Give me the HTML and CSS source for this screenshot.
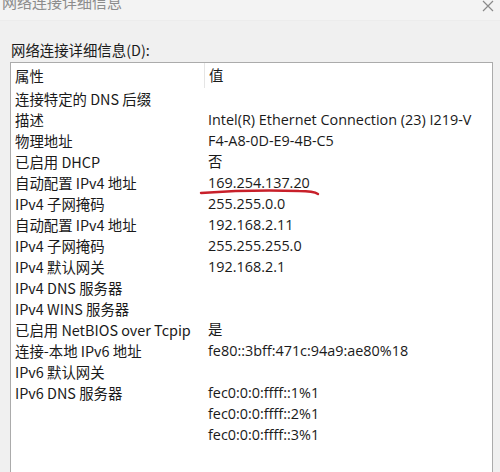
FILE: index.html
```
<!DOCTYPE html>
<html lang="zh">
<head>
<meta charset="utf-8">
<link rel="stylesheet" href="styles.css">
</head>
<body>
<div class="titlebar">
  <span class="title">网络连接详细信息</span>
  <svg class="close" width="12" height="12" viewBox="0 0 12 12"><path d="M1 1L11 11M11 1L1 11" stroke="#8a8a8a" stroke-width="1.2" fill="none"/></svg>
</div>
<div class="body">
  <div class="label">网络连接详细信息(D):</div>
  <div class="listbox">
    <div class="row head"><div class="c1">属性</div><div class="c2">值</div></div>
    <div class="row"><div class="c1">连接特定的 DNS 后缀</div><div class="c2"></div></div>
    <div class="row"><div class="c1">描述</div><div class="c2">Intel(R) Ethernet Connection (23) I219-V</div></div>
    <div class="row"><div class="c1">物理地址</div><div class="c2">F4-A8-0D-E9-4B-C5</div></div>
    <div class="row"><div class="c1">已启用 DHCP</div><div class="c2">否</div></div>
    <div class="row"><div class="c1">自动配置 IPv4 地址</div><div class="c2 mark">169.254.137.20<svg class="scribble" width="122" height="10" viewBox="0 0 122 10"><path d="M2 6 C30 4 70 3 100 4 C110 4 116 5 119 7" stroke="#c8202a" stroke-width="2.4" fill="none" stroke-linecap="round"/></svg></div></div>
    <div class="row"><div class="c1">IPv4 子网掩码</div><div class="c2">255.255.0.0</div></div>
    <div class="row"><div class="c1">自动配置 IPv4 地址</div><div class="c2">192.168.2.11</div></div>
    <div class="row"><div class="c1">IPv4 子网掩码</div><div class="c2">255.255.255.0</div></div>
    <div class="row"><div class="c1">IPv4 默认网关</div><div class="c2">192.168.2.1</div></div>
    <div class="row"><div class="c1">IPv4 DNS 服务器</div><div class="c2"></div></div>
    <div class="row"><div class="c1">IPv4 WINS 服务器</div><div class="c2"></div></div>
    <div class="row"><div class="c1">已启用 NetBIOS over Tcpip</div><div class="c2">是</div></div>
    <div class="row"><div class="c1">连接-本地 IPv6 地址</div><div class="c2">fe80::3bff:471c:94a9:ae80%18</div></div>
    <div class="row"><div class="c1">IPv6 默认网关</div><div class="c2"></div></div>
    <div class="row"><div class="c1">IPv6 DNS 服务器</div><div class="c2">fec0:0:0:ffff::1%1</div></div>
    <div class="row"><div class="c1"></div><div class="c2">fec0:0:0:ffff::2%1</div></div>
    <div class="row"><div class="c1"></div><div class="c2">fec0:0:0:ffff::3%1</div></div>
  </div>
</div>
</body>
</html>
```
FILE: styles.css
```
html, body {
  margin: 0;
  padding: 0;
  width: 500px;
  height: 472px;
  overflow: hidden;
  background: #f0f0f0;
  font-family: "Open Sans", "Noto Sans CJK SC", sans-serif;
  color: #1a1a1a;
}
.titlebar {
  height: 20px;
  background: #f3f3f3;
  position: relative;
  border-bottom: 1px solid #ececec;
}
.title {
  position: absolute;
  left: 2px;
  top: -8px;
  font-size: 15px;
  line-height: 20px;
  color: #8c8c8c;
  font-family: "Noto Sans CJK SC", sans-serif;
}
.close {
  position: absolute;
  right: 6px;
  top: 0px;
}
.body {
  padding: 19px 7px 0 10px;
}
.label {
  font-size: 14.4px;
  line-height: 20px;
  height: 22px;
  padding-left: 1px;
  font-family: "Noto Sans CJK SC", sans-serif;
}
.listbox {
  background: #fff;
  border: 1px solid #ababab;
  height: 420px;
  padding-top: 0;
}
.row {
  display: flex;
  height: 21px;
  line-height: 21px;
  white-space: nowrap;
}
.row.head {
  height: 25px;
  line-height: 26px;
}
.c1 {
  width: 189px;
  flex: none;
  padding-left: 4px;
  font-family: "Noto Sans CJK SC", sans-serif;
}
.head .c1 {
  border-right: 1px solid #e5e5e5;
}
.c2 {
  padding-left: 4px;
  font-family: "Open Sans", "Noto Sans CJK SC", sans-serif;
}
.c1, .c2 {
  font-size: 14.4px;
}
.mark {
  position: relative;
}
.scribble {
  position: absolute;
  left: -5px;
  top: 15px;
}
```
